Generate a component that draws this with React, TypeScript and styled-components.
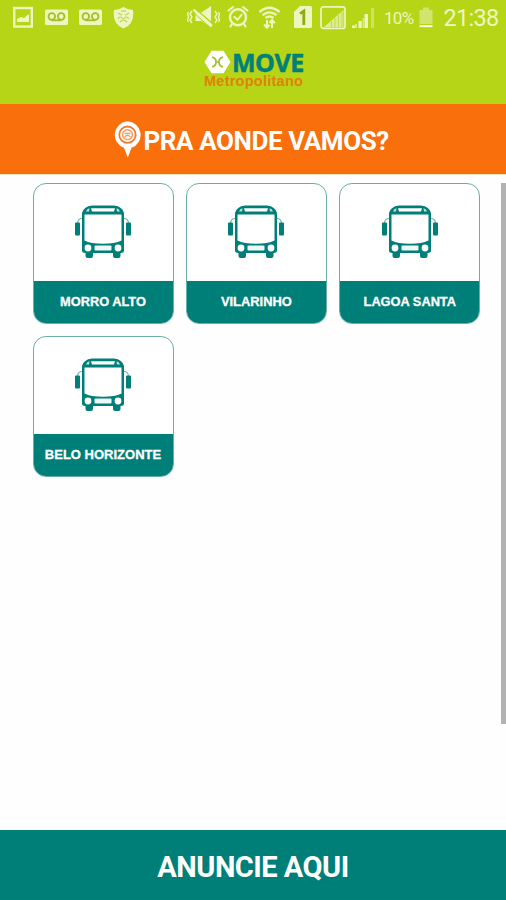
import React from 'react';
import styled, { createGlobalStyle } from 'styled-components';

const teal = '#007f79';
const lime = '#b5d516';
const pale = '#edf6bf';

const GlobalStyle = createGlobalStyle`
  * { box-sizing: border-box; }
  html, body { margin: 0; padding: 0; background: #fefefe; }
  body { font-family: Roboto, "Liberation Sans", sans-serif; overflow: hidden; }
  svg { display: block; flex: none; }
`;

const Screen = styled.div`
  width: 506px;
  height: 900px;
  display: flex;
  flex-direction: column;
  background: #fefefe;
`;

const StatusBar = styled.div`
  height: 36px;
  flex: none;
  display: flex;
  background: ${lime};
  color: ${pale};
`;

const Slot = styled.div<{ $gap: number }>`
  margin-left: ${(p) => p.$gap}px;
  height: 36px;
  flex: none;
`;

const Battery = styled.div`
  width: 29px;
  height: 36px;
  line-height: 36px;
  margin-left: 10px;
  flex: none;
  font-size: 17px;
  letter-spacing: -0.7px;
  white-space: nowrap;
`;

const Clock = styled.div`
  margin-left: 10.5px;
  height: 36px;
  line-height: 37px;
  font-size: 23.5px;
  letter-spacing: -0.7px;
  white-space: nowrap;
`;

const Header = styled.header`
  height: 68px;
  flex: none;
  display: flex;
  flex-direction: column;
  padding: 14px 0 0 204px;
  background: ${lime};
`;

const Brand = styled.div`
  display: flex;
  align-items: center;
  height: 23px;
  gap: 1px;
`;

const BrandName = styled.span`
  color: #00807a;
  font: bold 25px/22px "Open Sans", "Liberation Sans", sans-serif;
  -webkit-text-stroke: 0.5px #00807a;
  letter-spacing: -0.5px;
`;

const BrandSub = styled.span`
  color: #e28108;
  font: bold 14.5px/14px "Liberation Sans", sans-serif;
  letter-spacing: 0.25px;
  margin-top: 1px;
`;

const Question = styled.div`
  height: 71px;
  flex: none;
  display: flex;
  align-items: center;
  padding-left: 112.5px;
  gap: 2px;
  background: #f96f0c;
  border-bottom: 1px solid #fde3bf;
  color: #fff;
`;

const QuestionText = styled.h1`
  margin: 0;
  padding-top: 3px;
  font-size: 26px;
  line-height: 30px;
  font-weight: 700;
  letter-spacing: -0.42px;
  white-space: nowrap;
`;

const Content = styled.main`
  flex: 1;
  display: flex;
  justify-content: space-between;
  padding: 8px 0 0 32.5px;
`;

const Grid = styled.div`
  display: grid;
  grid-template-columns: repeat(3, 141px);
  grid-auto-rows: 141px;
  gap: 12px 12.4px;
`;

const Card = styled.button`
  padding: 0;
  border: 1px solid #6aaea8;
  border-radius: 13px;
  overflow: hidden;
  background: #fff;
  display: flex;
  flex-direction: column;
`;

const CardPicture = styled.div`
  flex: 1;
  width: 100%;
  display: flex;
  justify-content: center;
  padding-top: 21px;
`;

const CardLabel = styled.div<{ $size: number }>`
  width: 100%;
  height: 42px;
  flex: none;
  background: ${teal};
  color: #fff;
  text-align: center;
  font: bold ${(p) => p.$size}px/42px "Liberation Sans", Arial, sans-serif;
  -webkit-text-stroke: 0.3px #fff;
  white-space: nowrap;
`;

const ScrollThumb = styled.div`
  width: 5px;
  height: 541px;
  background: #b2b2b2;
`;

const Footer = styled.footer`
  height: 70px;
  flex: none;
  display: flex;
  justify-content: center;
  align-items: center;
  padding-top: 4px;
  background: ${teal};
  color: #fff;
  font-size: 29px;
  font-weight: 700;
  letter-spacing: -0.5px;
`;

const PictureIcon = () => (
  <svg width="20" height="36" fill="none" stroke={pale}>
    <rect x="1.2" y="8" width="17.6" height="18.6" strokeWidth="2.4" />
    <path d="M4 22v-3l4-2 3 1 5-4v8z" fill={pale} stroke="none" />
  </svg>
);

const VoicemailIcon = () => (
  <svg width="23" height="36">
    <rect y="9.5" width="23" height="15.5" rx="1.5" fill={pale} />
    <g fill="none" stroke="#a3bf27" strokeWidth="1.8">
      <circle cx="6.8" cy="16.5" r="3.3" />
      <circle cx="16.2" cy="16.5" r="3.3" />
      <path d="M6.8 20.3h9.4" />
    </g>
  </svg>
);

const ShieldIcon = () => (
  <svg width="21" height="36">
    <path d="M10.5 7Q15 10 20 10Q22 24 10.5 28.5Q-1 24 1 10Q6 10 10.5 7Z" fill={pale} />
    <g fill="none" stroke="#bfd45c" strokeWidth="1.2">
      <path d="M5 13l4 2.2M16 13l-4 2.2M5 19q2-4 5 0M11 19q2-4 5 0M7 22q3.5-4 7 0" />
      <path d="M8 11h5" />
    </g>
  </svg>
);

const MuteIcon = () => (
  <svg width="33" height="36" fill="none" stroke={pale}>
    <path d="M8.500 12.500h6l9.500-6.500v21.500l-9.500-6.500h-6z" fill={pale} stroke="none" />
    <path d="M8 8.500L26 24" stroke={lime} strokeWidth="1.600" />
    <path d="M6.500 9.700L25 26" strokeWidth="2.400" />
    <path d="M5.500 11.700L23 27.300" stroke={lime} strokeWidth="1" />
    <path d="M5 11l-2 3 2 3-2 3 2 3M1.500 12l-1 2 1 3-1 3 1 2M28 11l2 3-2 3 2 3-2 3M31.500 12l1 2-1 3 1 3-1 2" strokeWidth="1.400" />
  </svg>
);

const AlarmIcon = () => (
  <svg width="22" height="36" fill="none" stroke={pale} strokeWidth="2.4" strokeLinecap="round">
    <circle cx="11" cy="17.3" r="8" />
    <path d="M1.5 10.5L6 7M20.5 10.5L16 7M5 24l-1.5 2.5M17 24l1.5 2.5M7.5 17l3 2.8 4-5" strokeWidth="2.1" />
  </svg>
);

const WifiIcon = () => (
  <svg width="23" height="36" fill="none" stroke={pale} strokeWidth="2.3">
    <path d="M1.5 12Q11.5 3.5 21.5 12M4.5 15.2Q11.5 9.5 18.5 15.2M7.5 18Q11.5 15 15.5 18" />
    <path d="M9 20v8M6 24.5l3 3.2 2.5-2.8M14 28v-8M11.5 23l2.5-3 3 3.2" strokeWidth="2" />
  </svg>
);

const SimIcon = () => (
  <svg width="18" height="36">
    <path d="M6 6h10.5q1.5 0 1.5 1.5v19q0 1.5-1.5 1.5h-15Q0 28 0 26.5V12z" fill={pale} />
    <path d="M6 13.7l3.8-2.5V25" fill="none" stroke="#89ad13" strokeWidth="2.8" />
  </svg>
);

const BoxedSignalIcon = () => (
  <svg width="26" height="36">
    <rect x="1" y="6.8" width="24" height="21.6" rx="2.5" fill="none" stroke={pale} strokeWidth="1.7" />
    <path d="M4 27L23.5 10v17z" fill="#deed92" />
    <path d="M11.5 21v7M15 18v10M18.5 15v13M22 12v16" stroke="#c4dc4b" strokeWidth="1.1" />
  </svg>
);

const SignalIcon = () => (
  <svg width="22" height="36" fill={pale}>
    <path d="M0 25.5h3V28H0zM6.5 21h3.2v7H6.5zM12.5 14h3.5v14h-3.5z" />
    <path d="M19 8h3.2v20H19z" fill="#cee264" />
    <path d="M3 24h2v4H3zM10.5 18h2v10h-2z" fill="#d9e986" />
  </svg>
);

const BatteryIcon = () => (
  <svg width="14" height="36">
    <path d="M4 7.5h6V10h3.5v14H.5V10H4z" fill="#d1e46c" />
    <path d="M.5 25h13v2.2H.5z" fill="#f7fbdc" />
  </svg>
);

const BrandMark = () => (
  <svg width="27" height="24" viewBox="0 0 27 24">
    <path d="M7.5.8h12L26.5 12l-7 11.2h-12L.5 12z" fill="#fff" />
    <path d="M8 7.2q4.2 .8 4 4.8 .2 4-4 4.8M19 7.2q-4.2 .8-4 4.8-.2 4 4 4.8M11.500 12h4" fill="none" stroke="#a3bf2d" strokeWidth="1.7" />
  </svg>
);

const PinIcon = () => (
  <svg width="29" height="38" viewBox="0 0 29 38">
    <path d="M14.5 1.2a13.7 13.7 0 0 1 4 26.6L14.8 37.5 11 27.8A13.7 13.7 0 0 1 14.5 1.2z" fill="#fff" />
    <circle cx="14.5" cy="14.7" r="8.2" fill="#fff" stroke="#f67c2b" strokeWidth="1.8" />
    <circle cx="14.5" cy="14.7" r="4.9" fill="none" stroke="#f99a5b" strokeWidth="1.4" />
    <path d="M11.5 17q3-3.3 6 0M11.5 13.5h6" fill="none" stroke="#f99a5b" strokeWidth="1.3" />
  </svg>
);

const BusIcon = () => (
  <svg width="58" height="54" viewBox="0 0 58 54">
    <path
      fill={teal}
      fillRule="evenodd"
      d="M18 .5H40Q48.500 1.500 50 8V45.500Q50 48 46.500 48V51Q46.500 53 44.500 53H41Q39 53 39 51V48H19V51Q19 53 17 53H13.500Q11.500 53 11.500 51V48Q8 48 8 45.500V8Q9.500 1.500 18 .5Z
      M10.500 9.500V35.500Q17 38.800 29 38.800T47.500 35.500V9.500Z
      M17 3.200L18 6.500H40L41 3.200Z"
    />
    <path d="M12 6.500Q13 3.500 15.500 3.200L15 6.500zM46 6.500Q45 3.500 42.500 3.200L43 6.500z" fill="#c5e0dc" />
    <circle cx="14" cy="43" r="3.400" fill="#fff" />
    <circle cx="44" cy="43" r="3.400" fill="#fff" />
    <rect x="20.500" y="40.500" width="17" height="5" rx="1" fill="#eef8f6" />
    <path d="M8 13.500Q4 13.500 3.500 18M50 13.500Q54 13.500 54.500 18" fill="none" stroke="#75b5af" strokeWidth="1.200" />
    <rect x="1" y="17.500" width="5" height="13" rx="1" fill={teal} />
    <rect x="52" y="17.500" width="5" height="13" rx="1" fill={teal} />
  </svg>
);

const destinations = [
  { name: 'MORRO ALTO', size: 12.8 },
  { name: 'VILARINHO', size: 12.9 },
  { name: 'LAGOA SANTA', size: 12.8 },
  { name: 'BELO HORIZONTE', size: 13 },
];

export default function App() {
  return (
    <Screen>
      <GlobalStyle />
      <StatusBar>
        <Slot $gap={13}><PictureIcon /></Slot>
        <Slot $gap={12}><VoicemailIcon /></Slot>
        <Slot $gap={11}><VoicemailIcon /></Slot>
        <Slot $gap={11}><ShieldIcon /></Slot>
        <Slot $gap={53}><MuteIcon /></Slot>
        <Slot $gap={7}><AlarmIcon /></Slot>
        <Slot $gap={9}><WifiIcon /></Slot>
        <Slot $gap={13}><SimIcon /></Slot>
        <Slot $gap={8}><BoxedSignalIcon /></Slot>
        <Slot $gap={6}><SignalIcon /></Slot>
        <Battery>10%</Battery>
        <Slot $gap={6}><BatteryIcon /></Slot>
        <Clock>21:38</Clock>
      </StatusBar>
      <Header>
        <Brand>
          <BrandMark />
          <BrandName>MOVE</BrandName>
        </Brand>
        <BrandSub>Metropolitano</BrandSub>
      </Header>
      <Question>
        <PinIcon />
        <QuestionText>PRA AONDE VAMOS?</QuestionText>
      </Question>
      <Content>
        <Grid>
          {destinations.map((d) => (
            <Card key={d.name}>
              <CardPicture><BusIcon /></CardPicture>
              <CardLabel $size={d.size}>{d.name}</CardLabel>
            </Card>
          ))}
        </Grid>
        <ScrollThumb />
      </Content>
      <Footer>ANUNCIE AQUI</Footer>
    </Screen>
  );
}
